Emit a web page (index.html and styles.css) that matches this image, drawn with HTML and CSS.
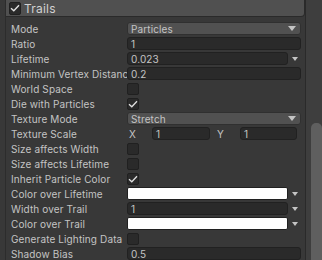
FILE: index.html
```html
<!DOCTYPE html>
<html>
<head>
<meta charset="utf-8">
<link rel="stylesheet" href="styles.css">
</head>
<body>
<div class="window">
  <div class="main">
    <div class="header">
      <span class="hcheck"><svg width="10" height="8" viewBox="0 0 10 8"><path d="M1 4.2 L3.8 6.8 L9 1.2" fill="none" stroke="#e0e0e0" stroke-width="1.4"/></svg></span>
      <span class="htitle">Trails</span>
    </div>
    <div class="rows">
      <div class="row"><span class="label">Mode</span><div class="dropdown"><span>Particles</span><i class="arrow"></i></div></div>
      <div class="row"><span class="label">Ratio</span><div class="field">1</div></div>
      <div class="row"><span class="label">Lifetime</span><div class="curve"><div class="field">0.023</div><i class="arrow"></i></div></div>
      <div class="row"><span class="label">Minimum Vertex Distance</span><div class="field">0.2</div></div>
      <div class="row"><span class="label">World Space</span><span class="check"></span></div>
      <div class="row"><span class="label">Die with Particles</span><span class="check"><svg width="10" height="8" viewBox="0 0 10 8"><path d="M1 4.2 L3.8 6.8 L9 1.2" fill="none" stroke="#e0e0e0" stroke-width="1.3"/></svg></span></div>
      <div class="row"><span class="label">Texture Mode</span><div class="dropdown"><span>Stretch</span><i class="arrow"></i></div></div>
      <div class="row"><span class="label">Texture Scale</span><div class="vec"><span class="axis">X</span><div class="field fx">1</div><span class="axis ay">Y</span><div class="field fy">1</div></div></div>
      <div class="row"><span class="label">Size affects Width</span><span class="check"></span></div>
      <div class="row"><span class="label">Size affects Lifetime</span><span class="check"></span></div>
      <div class="row"><span class="label">Inherit Particle Color</span><span class="check"><svg width="10" height="8" viewBox="0 0 10 8"><path d="M1 4.2 L3.8 6.8 L9 1.2" fill="none" stroke="#e0e0e0" stroke-width="1.3"/></svg></span></div>
      <div class="row"><span class="label">Color over Lifetime</span><div class="curve"><div class="color"></div><i class="arrow"></i></div></div>
      <div class="row"><span class="label">Width over Trail</span><div class="curve"><div class="field">1</div><i class="arrow"></i></div></div>
      <div class="row"><span class="label">Color over Trail</span><div class="curve"><div class="color"></div><i class="arrow"></i></div></div>
      <div class="row"><span class="label">Generate Lighting Data</span><span class="check"></span></div>
      <div class="row"><span class="label">Shadow Bias</span><div class="field">0.5</div></div>
    </div>
  </div>
  <div class="scroll"><div class="thumb"></div></div>
</div>
</body>
</html>
```
FILE: styles.css
```css
html, body {
  margin: 0;
  padding: 0;
  background: #383838;
  overflow: hidden;
}
.window {
  display: flex;
  width: 322px;
  height: 260px;
  overflow: hidden;
  font-family: Inter, "Noto Sans", sans-serif;
  font-size: 10px;
  letter-spacing: 0.12px;
  color: #c4c4c4;
}
.main {
  width: 300px;
  margin-left: 5px;
  border-left: 1px solid #2c2c2c;
  display: flex;
  flex-direction: column;
}
.header {
  height: 18px;
  flex: none;
  box-sizing: border-box;
  background: #505050;
  border: 1px solid #2a2a2a;
  border-left: 0;
  border-radius: 0 0 4px 0;
  display: flex;
  align-items: center;
  padding-left: 3px;
  margin-top: -1px;
  margin-bottom: 4px;
}
.hcheck {
  width: 12px;
  height: 13px;
  box-sizing: border-box;
  background: #2a2a2a;
  border: 1px solid #202020;
  border-radius: 2px;
  display: flex;
  align-items: center;
  justify-content: center;
}
.htitle {
  margin-left: 3px;
  font-size: 12px;
  letter-spacing: 0.2px;
  color: #d2d2d2;
}
.rows {
  display: flex;
  flex-direction: column;
}
.row {
  height: 15px;
  flex: none;
  display: flex;
  align-items: center;
  padding-left: 5px;
}
.label {
  width: 116px;
  flex: none;
  white-space: nowrap;
  overflow: hidden;
}
.field, .dropdown {
  flex: 1;
  height: 13px;
  box-sizing: border-box;
  border-radius: 3px;
  padding-left: 3px;
  display: flex;
  align-items: center;
  white-space: nowrap;
  margin-right: 4px;
}
.field {
  background: #2a2a2a;
  border: 1px solid #212121;
}
.dropdown {
  background: #515151;
  border: 1px solid #303030;
  justify-content: space-between;
  padding-right: 4px;
}
.arrow {
  width: 0;
  height: 0;
  border-left: 4px solid transparent;
  border-right: 4px solid transparent;
  border-top: 5px solid #c4c4c4;
}
.curve {
  flex: 1;
  display: flex;
  align-items: center;
  margin-right: 4px;
}
.curve .field {
  margin-right: 4px;
}
.curve .arrow {
  border-left-width: 3px;
  border-right-width: 3px;
  border-top-width: 4px;
  margin-right: 3px;
}
.color {
  flex: 1;
  height: 13px;
  background: #ffffff;
  border: 1px solid #202020;
  box-sizing: border-box;
  border-radius: 2px;
  margin-right: 4px;
}
.check {
  width: 12px;
  height: 12px;
  box-sizing: border-box;
  background: #2a2a2a;
  border: 1px solid #202020;
  border-radius: 2px;
  display: flex;
  align-items: center;
  justify-content: center;
}
.vec {
  flex: 1;
  display: flex;
  align-items: center;
  margin-right: 4px;
}
.axis {
  width: 25px;
  padding-left: 2px;
  box-sizing: border-box;
  flex: none;
}
.ay {
  width: 30px;
  padding-left: 7px;
}
.fx { flex: none; width: 58px; margin-right: 0; }
.fy { margin-right: 4px; }
.scroll {
  width: 17px;
  flex: none;
  background: #3e3e3e;
  border-left: 1px solid #2a2a2a;
  box-sizing: border-box;
  position: relative;
}
.thumb {
  position: absolute;
  left: 5px;
  right: 0;
  top: 123px;
  bottom: -20px;
  background: #5f5f5f;
  border-radius: 5px 5px 0 0;
}
```
